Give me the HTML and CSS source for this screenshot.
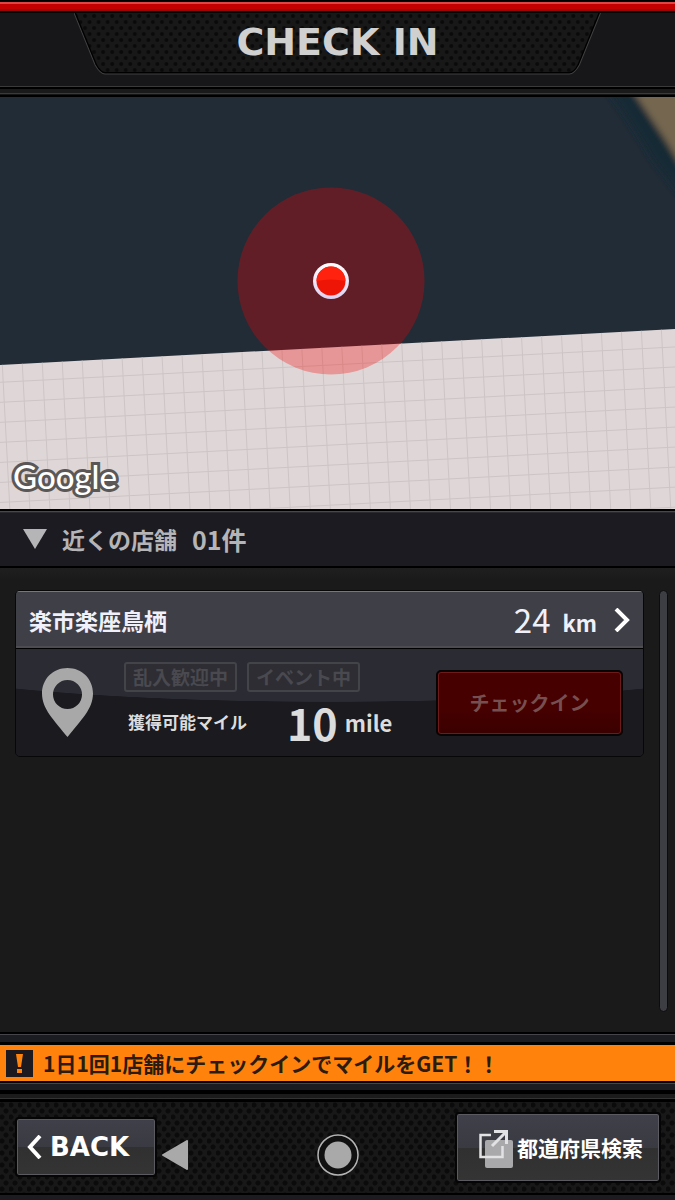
FILE: index.html
```html
<!DOCTYPE html>
<html lang="ja">
<head>
    <meta charset="UTF-8">
    <meta name="viewport" content="width=device-width, initial-scale=1.0">
    <title>CHECK IN</title>
    <link rel="stylesheet" href="styles.css">
</head>
<body>

    <!-- Header -->
    <header class="header">
        <div class="title-plate">
            <svg class="plate-shape" viewBox="0 0 524 62" preserveAspectRatio="none" aria-hidden="true">
                <defs>
                    <pattern id="mesh" width="9" height="12" patternUnits="userSpaceOnUse">
                        <rect width="9" height="12" fill="#181818"/>
                        <circle cx="2" cy="3" r="2" fill="#0a0a0a"/>
                        <circle cx="6.500" cy="9" r="2" fill="#0a0a0a"/>
                    </pattern>
                </defs>
                <path d="M1 0 L22 52 Q26 61 31 61 H493 Q498 61 502 52 L523 0 Z" fill="url(#mesh)"/>
                <path d="M1 0 L22 52 Q26 60 31 60 H493 Q498 60 502 52 L523 0" fill="none" stroke="#000" stroke-width="2"/>
                <path d="M0 0 L21 52 Q26 61 31 61 H493 Q498 61 503 52 L524 0" fill="none" stroke="#414143"/>
            </svg>
            <h1>CHECK IN</h1>
        </div>
    </header>

    <!-- Map -->
    <section class="map">
        <svg class="map-canvas" viewBox="0 0 675 412" preserveAspectRatio="xMidYMid slice" role="img" aria-label="地図">
            <defs>
                <pattern id="blocks" width="20" height="20" patternUnits="userSpaceOnUse" patternTransform="translate(8 4) rotate(-3)">
                    <path d="M0 0.500 H20 M0.500 0 V20" fill="none" stroke="#cdc5c5"/>
                </pattern>
                <filter id="soft" x="-20%" y="-20%" width="140%" height="140%">
                    <feGaussianBlur stdDeviation="3"/>
                </filter>
                <linearGradient id="ring" x1="0" y1="0" x2="0" y2="1">
                    <stop offset="0" stop-color="#fff"/>
                    <stop offset="1" stop-color="#dcd0f2"/>
                </linearGradient>
            </defs>
            <rect width="675" height="412" fill="#212c37"/>
            <g filter="url(#soft)">
                <path d="M604 -10 L622 14 L640 42 L652 62 L690 112 V-10 Z" fill="#172934"/>
                <path d="M630 -10 L642 8 L654 26 L666 44 L690 84 V-10 Z" fill="#746650"/>
            </g>
            <path d="M0 268 L675 232 V412 H0 Z" fill="#dfd7d7"/>
            <path d="M0 268 L675 232 V412 H0 Z" fill="url(#blocks)"/>
            <circle cx="331" cy="184" r="93.500" fill="#fa0000" fill-opacity="0.300"/>
            <circle cx="331" cy="184" r="18" fill="url(#ring)"/>
            <circle cx="331" cy="184" r="14.500" fill="#ee1507"/>
            <path d="M316.500 184 A14.500 14.500 0 0 1 345.500 184 Q331 181 316.500 184 Z" fill="#ff220f"/>
        </svg>
        <span class="map-credit">Google</span>
    </section>

    <!-- Nearby shops -->
    <div class="list-title">
        <svg width="24" height="20" viewBox="0 0 24 20" aria-hidden="true"><path d="M0 0 H24 L12 20 Z" fill="#b5b5b7"/></svg>
        <h2>近くの店舗</h2>
        <span class="count">01件</span>
    </div>

    <main class="list">
        <article class="shop">
            <a class="shop-head" href="#shop">
                <span class="shop-name">楽市楽座鳥栖</span>
                <span class="distance">24</span>
                <span class="unit">km</span>
                <svg width="16" height="24" viewBox="0 0 16 24" aria-hidden="true"><path d="M2 1 L13 12 L2 23" fill="none" stroke="#fff" stroke-width="4"/></svg>
            </a>
            <div class="shop-body">
                <svg class="pin" width="51" height="69" viewBox="0 0 51 69" aria-hidden="true">
                    <path d="M25.500 0 C11 0 0 11 0 25.500 C0 41 12 52 25.500 69 C39 52 51 41 51 25.500 C51 11 40 0 25.500 0 Z M25.500 12 A14.500 14.500 0 1 1 25.500 41 A14.500 14.500 0 1 1 25.500 12 Z" fill="#a8a8a8" fill-rule="evenodd"/>
                </svg>
                <div class="info">
                    <div class="badges">
                        <span class="badge">乱入歓迎中</span>
                        <span class="badge">イベント中</span>
                    </div>
                    <div class="miles">
                        <span class="miles-label">獲得可能マイル</span>
                        <span class="miles-value">10</span>
                        <span class="miles-unit">mile</span>
                    </div>
                </div>
                <button class="checkin-btn" type="button" disabled>チェックイン</button>
            </div>
        </article>
        <div class="scrollbar"></div>
    </main>

    <!-- Notice -->
    <div class="notice">
        <svg width="27" height="27" viewBox="0 0 27 27" aria-hidden="true">
            <rect width="27" height="27" fill="#1c1a20"/>
            <path d="M10 4 H17 L15 17 H12 Z M11 19 H16 V23 H11 Z" fill="#ff820d"/>
        </svg>
        <p>1日1回1店舗にチェックインでマイルをGET！！</p>
    </div>

    <!-- Footer -->
    <footer class="footer">
        <div class="footer-left">
            <button class="btn back-btn" type="button">
                <svg width="15" height="24" viewBox="0 0 15 24" aria-hidden="true"><path d="M13 1 L3 12 L13 23" fill="none" stroke="#fff" stroke-width="4"/></svg>
                BACK
            </button>
            <button class="nav-btn" type="button" aria-label="戻る">
                <svg width="26" height="30" viewBox="0 0 26 30" aria-hidden="true"><path d="M1 15 L25 1 V29 Z" fill="#a9a9a9" stroke="#a9a9a9" stroke-width="2" stroke-linejoin="round"/></svg>
            </button>
        </div>
        <button class="nav-btn" type="button" aria-label="ホーム">
            <svg width="42" height="42" viewBox="0 0 42 42" aria-hidden="true">
                <circle cx="21" cy="21" r="20" fill="#111" stroke="#b5b5b5" stroke-width="1.500"/>
                <circle cx="21" cy="21" r="13.500" fill="#a9a9a9"/>
            </svg>
        </button>
        <button class="btn search-btn" type="button">
            <svg width="34" height="38" viewBox="0 0 34 38" aria-hidden="true">
                <rect x="6" y="10" width="28" height="28" rx="2" fill="#a9a9ab"/>
                <path d="M12 5 H1.500 V27 H23.500 V16" fill="none" stroke="#e2e2e4" stroke-width="2.500"/>
                <path d="M13 16 L27 2 M15 1.500 H27.500 V14" fill="none" stroke="#e2e2e4" stroke-width="3"/>
            </svg>
            都道府県検索
        </button>
    </footer>

</body>
</html>
```
FILE: styles.css
```css
* {
    box-sizing: border-box;
}

body {
    font-family: "Noto Sans CJK JP", sans-serif;
    margin: 0;
    min-height: 100vh;
    display: flex;
    flex-direction: column;
    background: #1b1b1b;
    color: #fff;
}

h1, h2, p {
    margin: 0;
}

svg {
    display: block;
    flex: none;
}

button {
    font-family: inherit;
    margin: 0;
    padding: 0;
    border: none;
    cursor: pointer;
}

/* Header */
.header {
    height: 97px;
    padding-top: 13px;
    background: linear-gradient(#000 2px, #e04545 2px 4px, #c40000 4px 9px, #9c0505 9px 11px, #000 11px 13px,
        #17171a 13px 86px, #3a3a3a 86px 87px, #000 87px 89px, #1a1a1a 89px 93px, #3a3a3a 93px 94px, #151515 94px 95px, #000 95px);
}

.title-plate {
    position: relative;
    width: 78%;
    height: 62px;
    margin: 0 auto;
    display: flex;
    justify-content: center;
}

.plate-shape {
    position: absolute;
    top: 0;
    left: 0;
    width: 100%;
    height: 100%;
}

.title-plate h1 {
    position: relative;
    font-family: "DejaVu Sans", sans-serif;
    font-size: 38px;
    line-height: 58px;
    font-weight: bold;
    color: #d0d0d0;
}

/* Map */
.map {
    position: relative;
    height: 412px;
}

.map-canvas {
    width: 100%;
    height: 100%;
}

.map-credit {
    position: absolute;
    left: 13px;
    bottom: 13px;
    font-family: Lato, sans-serif;
    font-size: 33px;
    line-height: 40px;
    font-weight: 500;
    color: #fff;
    -webkit-text-stroke: 6px #5b5757;
    paint-order: stroke fill;
}

/* List title */
.list-title {
    height: 59px;
    padding: 0 23px;
    display: flex;
    align-items: center;
    gap: 15px;
    background: linear-gradient(#000 2px, #48484a 2px 3px, #2a2a2e 3px 4px, #1c1b21 4px 57px, #000 57px);
    color: #b5b5b7;
}

.list-title h2 {
    font-size: 23px;
    font-weight: bold;
}

.count {
    font-size: 25px;
    font-weight: bold;
}

/* Shop list */
.list {
    flex: 1;
    display: flex;
    gap: 15px;
    padding: 22px 7px 20px 15px;
    background: linear-gradient(#1f1f1f, #1a1a1a 12px);
}

.scrollbar {
    width: 9px;
    border: 1px solid #0c0c0c;
    border-radius: 5px;
    background: #3d3d44;
}

.shop {
    flex: 1;
    align-self: flex-start;
    border: 1px solid #070707;
    border-radius: 5px;
    overflow: hidden;
}

.shop-head {
    height: 58px;
    padding: 0 13px;
    display: flex;
    align-items: center;
    background: #3f3f47;
    border-top: 1px solid #77777a;
    border-bottom: 1px solid #000;
    box-shadow: inset 0 -2px #4c4c52;
    color: #f0f0fa;
    text-decoration: none;
}

.shop-name {
    flex: 1;
    font-size: 23px;
    font-weight: bold;
}

.distance {
    font-size: 33px;
    font-weight: 400;
    line-height: 40px;
    margin-right: 12px;
    padding-bottom: 3px;
}

.unit {
    font-size: 22px;
    line-height: 40px;
    font-weight: bold;
    margin-right: 17px;
    padding-top: 3px;
}

.shop-body {
    height: 107px;
    padding: 0 20px 0 26px;
    display: flex;
    align-items: center;
    background: radial-gradient(76% 53px at 50% 0, #2b2b33 99%, #1a1a1f 100%);
}

.pin {
    margin-right: 31px;
}

.info {
    flex: 1;
    align-self: stretch;
    padding-top: 13px;
}

.badges {
    display: flex;
    gap: 10px;
}

.badge {
    height: 30px;
    padding: 0 7px;
    border: 2px solid #43434a;
    border-radius: 3px;
    background: #2d2d33;
    color: #49494f;
    font-size: 19px;
    line-height: 26px;
    font-weight: bold;
}

.miles {
    display: flex;
    align-items: center;
    padding-left: 4px;
    color: #dcdcdc;
    font-weight: bold;
    line-height: 60px;
}

.miles-label {
    font-size: 17px;
    margin-right: 40px;
}

.miles-value {
    font-size: 43px;
    margin-right: 7px;
}

.miles-unit {
    font-size: 22px;
}

.checkin-btn {
    width: 187px;
    height: 66px;
    border: 2px solid #080404;
    border-radius: 5px;
    background: linear-gradient(#470000 55%, #3b0000);
    box-shadow: inset 0 0 0 1px #6e1a1a;
    color: #765050;
    font-size: 20px;
    font-weight: bold;
}

/* Notice */
.notice {
    height: 70px;
    padding: 13px 6px 21px;
    display: flex;
    align-items: center;
    gap: 10px;
    background: linear-gradient(#000 2px, #45454a 2px 3px, #1b1b22 3px 10px, #000 10px 13px, #ff820d 13px 49px,
        #000 49px 51px, #45454a 51px 52px, #1b1b22 52px 58px, #000 58px 62px, #1b1b1b 62px 66px, #333 66px 67px, #000 67px);
    color: #2b1b10;
}

.notice p {
    font-size: 21px;
    font-weight: bold;
}

/* Footer */
.footer {
    height: 98px;
    padding: 0 14px 3px 15px;
    display: grid;
    grid-template-columns: 1fr auto 1fr;
    align-items: center;
    border-bottom: 5px solid #1b1b20;
    background:
        linear-gradient(#000, #000) bottom / 100% 2px no-repeat,
        radial-gradient(circle at 2px 3px, #0b0b0b 2px, transparent 3px) 0 0 / 9px 12px,
        radial-gradient(circle at 6px 9px, #0b0b0b 2px, transparent 3px) 0 0 / 9px 12px,
        #181818;
}

.footer-left {
    display: flex;
    align-items: center;
    gap: 5px;
}

.btn {
    display: flex;
    align-items: center;
    border: 2px solid #050505;
    border-radius: 4px;
    background: linear-gradient(#40404a, #3a3a42 50%, #303030 50%, #343434);
    box-shadow: inset 0 0 0 1px #5a5a60;
    color: #fff;
}

.back-btn {
    width: 142px;
    height: 60px;
    padding-left: 10px;
    gap: 8px;
    font-family: "DejaVu Sans", sans-serif;
    font-size: 26px;
    font-weight: bold;
}

.search-btn {
    justify-self: end;
    width: 206px;
    height: 71px;
    padding-left: 22px;
    gap: 4px;
    font-size: 21px;
    font-weight: bold;
}

.search-btn svg {
    margin-top: 4px;
}

.nav-btn {
    padding-top: 16px;
    background: none;
}
```
